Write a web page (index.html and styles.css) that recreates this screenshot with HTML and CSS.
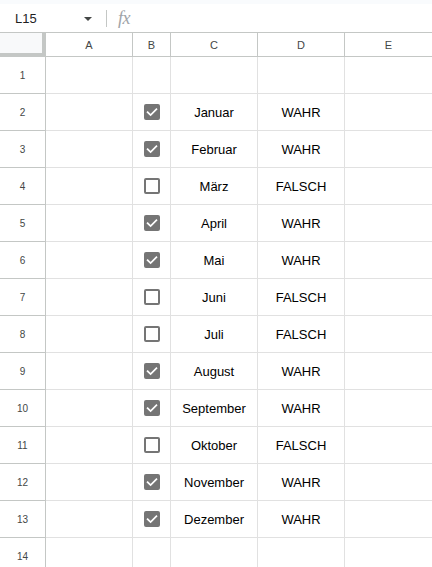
FILE: index.html
```html
<!DOCTYPE html>
<html>
<head>
<meta charset="utf-8">
<link rel="stylesheet" href="styles.css">
</head>
<body>
<div class="topstrip"></div>
<div class="fbar">
  <div class="namebox"><span class="nb-text">L15</span><span class="nb-arrow"></span></div>
  <div class="fdiv"></div>
  <div class="fx">fx</div>
</div>
<div class="grid">
  <div class="corner"></div>
  <div class="ch">A</div><div class="ch">B</div><div class="ch">C</div><div class="ch">D</div><div class="ch last">E</div>

  <div class="rh">1</div><div class="c"></div><div class="c"></div><div class="c"></div><div class="c"></div><div class="c last"></div>

  <div class="rh">2</div><div class="c"></div><div class="c"><span class="cb on"><svg viewBox="0 0 16 16"><path d="M3.6 8.2 L6.6 11.1 L12.4 5.3" /></svg></span></div><div class="c">Januar</div><div class="c">WAHR</div><div class="c last"></div>
  <div class="rh">3</div><div class="c"></div><div class="c"><span class="cb on"><svg viewBox="0 0 16 16"><path d="M3.6 8.2 L6.6 11.1 L12.4 5.3" /></svg></span></div><div class="c">Februar</div><div class="c">WAHR</div><div class="c last"></div>
  <div class="rh">4</div><div class="c"></div><div class="c"><span class="cb"></span></div><div class="c">März</div><div class="c">FALSCH</div><div class="c last"></div>
  <div class="rh">5</div><div class="c"></div><div class="c"><span class="cb on"><svg viewBox="0 0 16 16"><path d="M3.6 8.2 L6.6 11.1 L12.4 5.3" /></svg></span></div><div class="c">April</div><div class="c">WAHR</div><div class="c last"></div>
  <div class="rh">6</div><div class="c"></div><div class="c"><span class="cb on"><svg viewBox="0 0 16 16"><path d="M3.6 8.2 L6.6 11.1 L12.4 5.3" /></svg></span></div><div class="c">Mai</div><div class="c">WAHR</div><div class="c last"></div>
  <div class="rh">7</div><div class="c"></div><div class="c"><span class="cb"></span></div><div class="c">Juni</div><div class="c">FALSCH</div><div class="c last"></div>
  <div class="rh">8</div><div class="c"></div><div class="c"><span class="cb"></span></div><div class="c">Juli</div><div class="c">FALSCH</div><div class="c last"></div>
  <div class="rh">9</div><div class="c"></div><div class="c"><span class="cb on"><svg viewBox="0 0 16 16"><path d="M3.6 8.2 L6.6 11.1 L12.4 5.3" /></svg></span></div><div class="c">August</div><div class="c">WAHR</div><div class="c last"></div>
  <div class="rh">10</div><div class="c"></div><div class="c"><span class="cb on"><svg viewBox="0 0 16 16"><path d="M3.6 8.2 L6.6 11.1 L12.4 5.3" /></svg></span></div><div class="c">September</div><div class="c">WAHR</div><div class="c last"></div>
  <div class="rh">11</div><div class="c"></div><div class="c"><span class="cb"></span></div><div class="c">Oktober</div><div class="c">FALSCH</div><div class="c last"></div>
  <div class="rh">12</div><div class="c"></div><div class="c"><span class="cb on"><svg viewBox="0 0 16 16"><path d="M3.6 8.2 L6.6 11.1 L12.4 5.3" /></svg></span></div><div class="c">November</div><div class="c">WAHR</div><div class="c last"></div>
  <div class="rh">13</div><div class="c"></div><div class="c"><span class="cb on"><svg viewBox="0 0 16 16"><path d="M3.6 8.2 L6.6 11.1 L12.4 5.3" /></svg></span></div><div class="c">Dezember</div><div class="c">WAHR</div><div class="c last"></div>
  <div class="rh">14</div><div class="c"></div><div class="c"></div><div class="c"></div><div class="c"></div><div class="c last"></div>
</div>
</body>
</html>
```
FILE: styles.css
```css
* { box-sizing: border-box; }
html, body { margin: 0; padding: 0; background: #fff; overflow: hidden; }
body { width: 432px; height: 567px; font-family: "Liberation Sans", Arial, sans-serif; }

.topstrip { height: 4px; background: #f9fbfd; }
.fbar {
  height: 29px;
  display: flex;
  align-items: center;
  border-bottom: 1px solid #c4c7c5;
  background: #fff;
}
.namebox {
  width: 100px;
  display: flex;
  align-items: center;
  padding-left: 15px;
  padding-right: 8px;
}
.nb-text { font-size: 13px; color: #1f1f1f; flex: 1; }
.nb-arrow {
  width: 0; height: 0;
  border-left: 4px solid transparent;
  border-right: 4px solid transparent;
  border-top: 4px solid #444746;
  margin-top: 1px;
}
.fdiv { width: 1px; height: 17px; background: #c4c7c5; margin-left: 6px; }
.fx {
  margin-left: 11px;
  font-family: "Liberation Serif", "Times New Roman", serif;
  font-style: italic;
  font-size: 18px;
  color: #a0a4a8;
  letter-spacing: -0.5px;
  margin-top: 1px;
}

.grid {
  display: grid;
  grid-template-columns: 46px 87px 38px 87px 87px 1fr;
  grid-template-rows: 24px repeat(14, 37px);
}
.corner {
  background: #f8f9fa;
  border-right: 4px solid #c4c7c5;
  border-bottom: 4px solid #c4c7c5;
}
.ch {
  border-right: 1px solid #c4c7c5;
  border-bottom: 1px solid #c4c7c5;
  display: flex; align-items: center; justify-content: center;
  font-size: 11px; color: #444746;
  padding-top: 1px;
}
.rh {
  border-right: 1px solid #c4c7c5;
  border-bottom: 1px solid #c4c7c5;
  display: flex; align-items: center; justify-content: center;
  font-size: 10px; color: #444746;
}
.c {
  border-right: 1px solid #e1e1e1;
  border-bottom: 1px solid #e1e1e1;
  display: flex; align-items: center; justify-content: center;
  font-size: 13px; color: #000;
  padding-top: 1px;
}
.last { border-right: none; }
.cb {
  width: 16px; height: 16px;
  border: 2px solid #757575;
  border-radius: 2px;
  display: block;
  margin-top: -1px;
}
.cb.on { background: #757575; border-color: #757575; position: relative; }
.cb svg { position: absolute; left: -2px; top: -2px; width: 16px; height: 16px; }
.cb path { fill: none; stroke: #fff; stroke-width: 1.7; stroke-linecap: square; }
```
